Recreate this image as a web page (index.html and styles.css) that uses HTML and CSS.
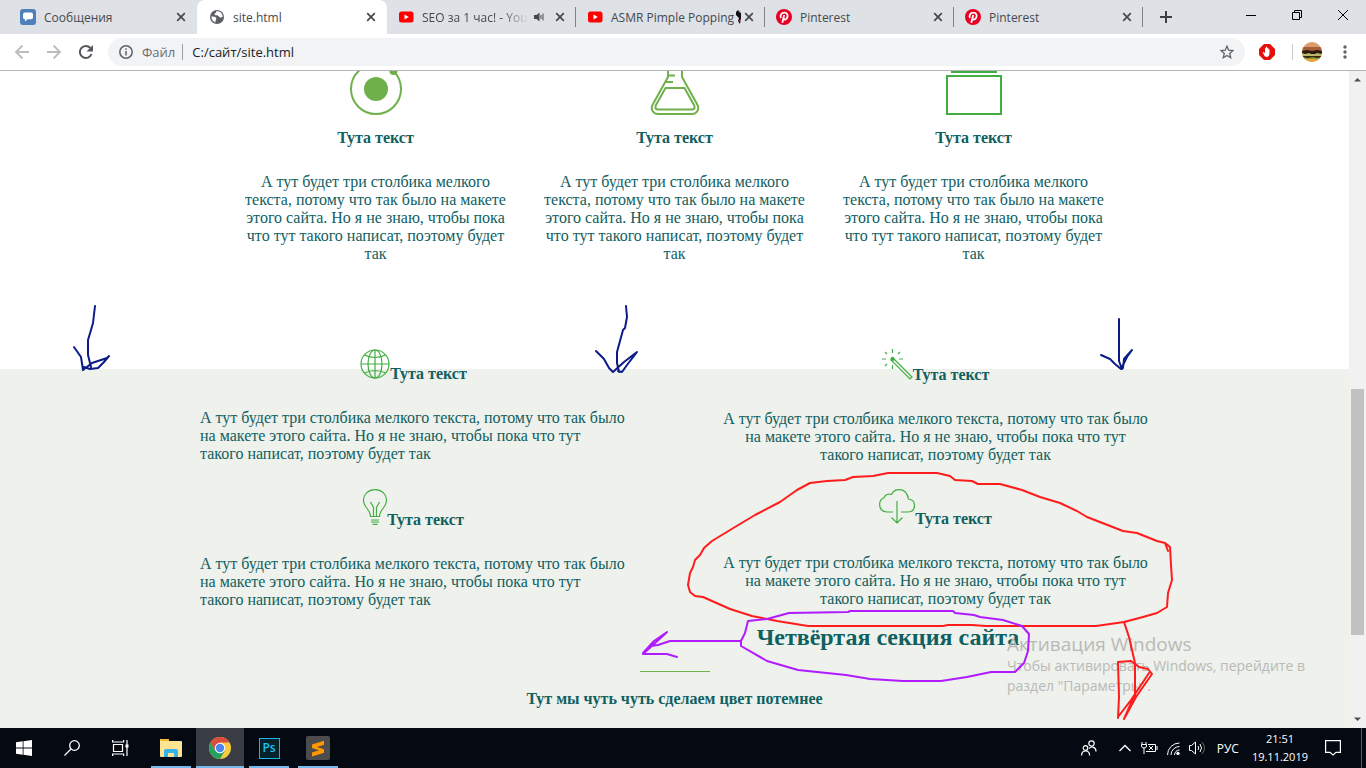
FILE: index.html
```html
<!DOCTYPE html>
<html lang="ru">
<head>
<meta charset="utf-8">
<title>site.html</title>
<link rel="stylesheet" href="styles.css">
</head>
<body>
<svg class="defs" width="0" height="0" aria-hidden="true">
  <symbol id="x" viewBox="0 0 10 10"><path d="M1.2 1.2 8.8 8.8M8.8 1.2 1.2 8.8" stroke="#45494d" stroke-width="1.7"/></symbol>
  <symbol id="yt" viewBox="0 0 16 16"><rect x="1" y="2.500" width="14.500" height="11" rx="2.500" fill="#f00"/><path d="M6.500 5.500v5L10.800 8z" fill="#fff"/></symbol>
  <symbol id="pin" viewBox="0 0 16 16"><circle cx="8" cy="8" r="8" fill="#e60023"/><path d="M6.300 13.800 8.200 6M5 9C3.500 6.500 5.500 3.700 8.300 3.700c2.600 0 3.800 1.900 3.200 4.100-.6 2.600-3.200 3.500-4.200 1.800" fill="none" stroke="#fff" stroke-width="1.800"/></symbol>
</svg>

<header class="browser">
  <nav class="tabs" aria-label="Вкладки">
    <div class="tab">
      <svg class="fav" viewBox="0 0 16 16"><rect width="16" height="16" rx="3" fill="#4f80b9"/><path d="M5 3.500h6q2 0 2 2v2.800q0 2-2 2H7.500L5 12.500v-2.200q-2 0-2-2V5.500q0-2 2-2z" fill="#fff"/></svg>
      <span class="tab-title">Сообщения</span>
      <button class="close" aria-label="Закрыть"><svg><use href="#x"/></svg></button>
    </div>
    <div class="tab active">
      <svg class="fav" viewBox="0 0 16 16"><circle cx="8" cy="8" r="7" fill="#5a5e63"/><path d="M2.300 7.500c2 0 5 .2 5 2.200 0 1.500-1 1.500-1 3.800C4 12.600 2.300 10.500 2.300 7.500zM7 2.300c0 1.700 0 2-1.500 2.200 0 1.500.5 1.700 2.500 1.700 2 .3 2 2.300 3.500 2.300 1 0 1.300-.6 2.200-.6 0-2.900-1.700-5-4.200-5.700z" fill="#fff"/></svg>
      <span class="tab-title">site.html</span>
      <button class="close" aria-label="Закрыть"><svg><use href="#x"/></svg></button>
    </div>
    <div class="tab divided">
      <svg class="fav"><use href="#yt"/></svg>
      <span class="tab-title fade">SEO за 1 час! - You</span>
      <svg class="sound" viewBox="0 0 12 12"><path d="M1 4h2.500L6.500 1.500v9L3.500 8H1z" fill="#45494d"/><path d="M8 4v4M10 2.500v7" stroke="#45494d"/></svg>
      <button class="close" aria-label="Закрыть"><svg><use href="#x"/></svg></button>
    </div>
    <div class="tab divided">
      <svg class="fav"><use href="#yt"/></svg>
      <span class="tab-title">ASMR Pimple Popping</span>
      <svg class="parrot" viewBox="0 0 7 14"><path d="M1 2 3 0l3 3v5l-1 6-2-3 1-3-3-3z" fill="#111"/><path d="M3 1h2v2z" fill="#2bb"/><path d="M4 10h2v2z" fill="#e5a"/></svg>
      <button class="close" aria-label="Закрыть"><svg><use href="#x"/></svg></button>
    </div>
    <div class="tab divided">
      <svg class="fav"><use href="#pin"/></svg>
      <span class="tab-title">Pinterest</span>
      <button class="close" aria-label="Закрыть"><svg><use href="#x"/></svg></button>
    </div>
    <div class="tab divided">
      <svg class="fav"><use href="#pin"/></svg>
      <span class="tab-title">Pinterest</span>
      <button class="close" aria-label="Закрыть"><svg><use href="#x"/></svg></button>
    </div>
    <button class="new-tab" aria-label="Новая вкладка"><svg width="12" height="12" viewBox="0 0 12 12"><path d="M6 0v12M0 6h12" stroke="#3c4043" stroke-width="2"/></svg></button>
    <div class="window-buttons">
      <button aria-label="Свернуть"><svg width="10" height="10"><path d="M0 5.500h10" stroke="#000"/></svg></button>
      <button aria-label="Развернуть"><svg width="10" height="10" fill="none" stroke="#000"><path d="M.5 2.500h7v7h-7zM2.500 2.500v-2h7v7h-2"/></svg></button>
      <button aria-label="Закрыть окно"><svg width="10" height="10"><path d="m0 0 10 10M10 0 0 10" stroke="#000"/></svg></button>
    </div>
  </nav>

  <div class="toolbar">
    <button class="tool" aria-label="Назад"><svg width="16" height="16" viewBox="0 0 16 16" fill="none" stroke="#babcbe" stroke-width="1.800"><path d="M15 8H2M8.500 1.500 2 8l6.500 6.500"/></svg></button>
    <button class="tool" aria-label="Вперёд"><svg width="16" height="16" viewBox="0 0 16 16" fill="none" stroke="#babcbe" stroke-width="1.800"><path d="M1 8h13M7.500 1.500 14 8l-6.500 6.500"/></svg></button>
    <button class="tool" aria-label="Обновить"><svg width="16" height="16" viewBox="0 0 16 16"><path d="M13.500 10A6 6 0 1 1 12.400 4" fill="none" stroke="#55595e" stroke-width="2"/><path d="M15 1v6.500H8.500z" fill="#55595e"/></svg></button>
    <div class="omnibox">
      <svg width="14" height="14" viewBox="0 0 14 14" fill="none" stroke="#5f6368" stroke-width="1.500"><circle cx="7" cy="7" r="6.200"/><path d="M7 6v4.500M7 3.300v1.500"/></svg>
      <label for="url">Файл</label>
      <input id="url" type="text" value="C:/сайт/site.html">
      <button class="star" aria-label="В закладки"><svg width="14" height="14" viewBox="0 0 14 14"><path d="m7 1.200 1.700 4 4.300.4-3.300 2.800 1 4.300L7 10.400l-3.700 2.300 1-4.300L1 5.600l4.300-.4z" fill="none" stroke="#5f6368" stroke-width="1.300"/></svg></button>
    </div>
    <div class="extras">
      <button aria-label="AdBlock"><svg width="16" height="16" viewBox="0 0 16 16"><path d="M5 0h6l5 5v6l-5 5H5l-5-5V5z" fill="#e60f0f"/><path d="M4.500 8 6 9V4.200q.6-.8 1 0V3.200q.7-.8 1.200 0v1q.6-.8 1.100 0v1.200q.8-.6 1.200 0V9q0 4-3.200 4C5.500 13 5 11 3.800 8.600z" fill="#fff"/></svg></button>
      <span class="rule"></span>
      <button aria-label="Профиль"><svg width="20" height="20" viewBox="0 0 20 20"><clipPath id="round"><circle cx="10" cy="10" r="10"/></clipPath><g clip-path="url(#round)"><path fill="#d99b6c" d="M0 0h20v20H0z"/><path fill="#a65f38" d="M0 5h20v4H0z"/><path d="m0 9 5-1 5 1 5-1 5 1v3H0z" fill="#2c1a0e"/><path d="m0 11 3 1 4-1 4 2 4-2 5 1v2H0z" fill="#b9b96a"/><path fill="#3b2612" d="M0 14h20v2H0z"/><path fill="#7e9a32" d="m0 15 6 1 5-1 4 1 5-1v2H0z"/><path fill="#e9a53b" d="M0 17h20v3H0z"/></g></svg></button>
      <button aria-label="Меню"><svg width="4" height="14" fill="#5f6368"><circle cx="2" cy="2" r="1.700"/><circle cx="2" cy="7" r="1.700"/><circle cx="2" cy="12" r="1.700"/></svg></button>
    </div>
  </div>
</header>

<div class="viewport">
  <main class="site">
    <section class="columns">
      <article>
        <svg width="52" height="44" viewBox="1 0 52 44"><circle cx="27" cy="18" r="25" fill="none" stroke="#6fb04a" stroke-width="2"/><circle cx="27" cy="18" r="12" fill="#6fb04a"/><circle cx="44.500" cy="0" r="4" fill="#6fb04a"/></svg>
        <h3>Тута текст</h3>
        <p>А тут будет три столбика мелкого текста, потому что так было на макете этого сайта. Но я не знаю, чтобы пока что тут такого написат, поэтому будет так</p>
      </article>
      <article>
        <svg width="50" height="44" viewBox="0 0 50 44" fill="none" stroke="#6fb04a" stroke-width="2"><path d="M18 0v6L3 33c-3 5 0 10 5 10h34c5 0 8-5 5-10L32 6V0M18 4.500h7M16 11h7M15.500 17h19L44 34c1.500 3 0 4.500-2 4.500H8c-2 0-3.500-1.500-2-4.500z"/></svg>
        <h3>Тута текст</h3>
        <p>А тут будет три столбика мелкого текста, потому что так было на макете этого сайта. Но я не знаю, чтобы пока что тут такого написат, поэтому будет так</p>
      </article>
      <article>
        <svg width="56" height="44" viewBox="0 0 56 44" fill="none" stroke="#42ae42" stroke-width="2"><path d="M1 5h54v38H1zM5 1h46"/></svg>
        <h3>Тута текст</h3>
        <p>А тут будет три столбика мелкого текста, потому что так было на макете этого сайта. Но я не знаю, чтобы пока что тут такого написат, поэтому будет так</p>
      </article>
    </section>

    <section class="tinted">
      <div class="features">
        <article>
          <h3><svg width="30" height="30" viewBox="0 0 30 30" fill="none" stroke="#42ae42" stroke-width="1.200"><circle cx="15" cy="15" r="14"/><ellipse cx="15" cy="15" rx="7" ry="14"/><path d="M15 1v28M1 15h28M4.500 6q10.500 5 21 0M4.500 24q10.500-5 21 0"/></svg>Тута текст</h3>
          <p>А тут будет три столбика мелкого текста, потому что так было на макете этого сайта. Но я не знаю, чтобы пока что тут такого написат, поэтому будет так</p>
        </article>
        <article class="centered">
          <h3><svg width="31" height="31" viewBox="0 0 31 31" fill="none" stroke="#42ae42" stroke-width="1.200"><path d="M10.500 8.500 30 28l-2 2L9 11z"/><circle cx="10.500" cy="10" r="1.500" fill="#42ae42"/><path d="M10.500 0v4M10.500 16v4M0 10h4M17 10h4M3 3l2 2M18 3l-2 2M3 17l2-2"/></svg>Тута текст</h3>
          <p>А тут будет три столбика мелкого текста, потому что так было на макете этого сайта. Но я не знаю, чтобы пока что тут такого написат, поэтому будет так</p>
        </article>
        <article>
          <h3><svg width="24" height="36" viewBox="0 0 24 36" fill="none" stroke="#42ae42" stroke-width="1.200"><path d="M7.500 27.500c0-7-7-9-7-16C.5 5 5.500.6 12 .6S23.500 5 23.500 11.500c0 7-7 9-7 16zM8 31h8M8 33h8M9.500 35.300h5M10.500 27v-8.500L7.500 13M13.500 27v-8.500l3-5.500"/></svg>Тута текст</h3>
          <p>А тут будет три столбика мелкого текста, потому что так было на макете этого сайта. Но я не знаю, чтобы пока что тут такого написат, поэтому будет так</p>
        </article>
        <article class="centered">
          <h3><svg width="36" height="35" viewBox="0 0 36 35" fill="none" stroke="#42ae42" stroke-width="1.200"><path d="M14 23H8C3 23 .6 19.500.6 15.500c0-3.500 2-6 4.700-7C6 5.500 9 4.500 12.500 5.500 14 2 17 .6 20 .6c5 0 8.500 3.400 9.500 9.400 3.500.5 6 3 6 6.500 0 4-2.500 6.500-7 6.500H22M18 12v21M12.500 28.500 18 34l5.500-5.500"/></svg>Тута текст</h3>
          <p>А тут будет три столбика мелкого текста, потому что так было на макете этого сайта. Но я не знаю, чтобы пока что тут такого написат, поэтому будет так</p>
        </article>
        <h2>Четвёртая секция сайта</h2>
      </div>
      <hr>
      <h3 class="subtitle">Тут мы чуть чуть сделаем цвет потемнее</h3>
    </section>
  </main>
  <div class="scrollbar" aria-hidden="true">
    <svg width="17" height="17"><path d="M5 10.500 8.500 7l3.500 3.500z" fill="#505050"/></svg>
    <div class="track"><div class="thumb"></div></div>
    <svg width="17" height="17"><path d="M5 6.500 8.500 10 12 6.500z" fill="#505050"/></svg>
  </div>
</div>

<footer class="taskbar">
  <div class="system">
    <button aria-label="Пуск"><svg width="16" height="16" fill="#fff"><path d="m0 2.300 6.700-1v6.200H0zM7.500 1.200 16 0v7.500H7.500zM0 8.400h6.700v6.300l-6.700-1zM7.500 8.400H16V16l-8.500-1.200z"/></svg></button>
    <button aria-label="Поиск"><svg width="16" height="16" fill="none" stroke="#fff" stroke-width="1.300"><circle cx="10.500" cy="5.500" r="4.800"/><path d="M7 9 .5 15.500"/></svg></button>
    <button aria-label="Просмотр задач"><svg width="17" height="16" fill="none" stroke="#fff" stroke-width="1.200"><path d="M1.500 4.500h9v7h-9zM.6 0v2h11V0M.6 16v-2h11v2M15 0v16"/><path d="M13.500 4.500h3v3h-3z" fill="#fff" stroke="none"/></svg></button>
  </div>
  <div class="apps">
    <button aria-label="Проводник"><svg width="22" height="18"><path d="M0 0h8l1 2h12q1 0 1 1v14q0 1-1 1H1q-1 0-1-1z" fill="#ffe593"/><path d="M1 0h8v2H0z" fill="#f5b82e"/><path d="M4 18v-6q0-2 2-2h10q2 0 2 2v6h-4v-4H8v4z" fill="#36b4e8"/></svg></button>
    <button class="current" aria-label="Chrome"><svg width="22" height="22" viewBox="0 0 22 22"><circle cx="11" cy="11" r="11" fill="#f8ca3e"/><path d="M1.500 5.500A11 11 0 0 1 20.500 5.500H11L6.200 13.700z" fill="#dd4b3e"/><path d="M1.500 5.500A11 11 0 0 0 11 22l4.800-8.200H6.200z" fill="#23a163"/><circle cx="11" cy="11" r="5.200" fill="#fff"/><circle cx="11" cy="11" r="4.200" fill="#4a86ee"/></svg></button>
    <button class="ps" aria-label="Photoshop"><span>Ps</span></button>
    <button aria-label="Sublime Text"><svg width="24" height="24"><rect width="24" height="24" rx="2" fill="#4c4c4c"/><path d="M6 8.500 18 4.700v4L11 11l7 2.300v3.400L6 20.500v-4l7-2.200-7-2.300z" fill="#ff9800"/></svg></button>
  </div>
  <div class="tray">
    <svg width="16" height="16" fill="none" stroke="#fff" stroke-width="1.200"><circle cx="10.500" cy="3.500" r="2.700"/><circle cx="4.500" cy="8" r="2.300"/><path d="M.6 15.500c0-6 8-6 8 0M8 8.500c3-3 7-1 7 3"/></svg>
    <svg class="chevron" width="12" height="8" fill="none" stroke="#fff" stroke-width="1.300"><path d="M.5 7 6 1.500 11.500 7"/></svg>
    <svg width="17" height="12" fill="none" stroke="#fff"><path d="M7 2.500h7.500v7H5M16 4v4M3 6v6M1 0v2.500M5 0v2.500M.5 2.500h5V4q0 2-2.500 2T.5 4zM8 4l4 4M12 4 8 8"/></svg>
    <svg width="13" height="13" fill="none" stroke="#fff"><path d="M.5 13A12 12 0 0 1 12.500 1M4 13A8.500 8.500 0 0 1 12.500 4.500M7.500 13A5 5 0 0 1 12.500 8"/><circle cx="11" cy="11.500" r="1.300" fill="#fff"/></svg>
    <svg width="17" height="14" fill="none" stroke="#fff"><path d="M.5 4.500h2L6.500 1v12l-4-3.500h-2zM9 5q1.500 2 0 4M11 3q3 4 0 8"/><path d="M13 1q5 6 0 12" stroke="#666"/></svg>
    <span class="lang">РУС</span>
    <time datetime="2019-11-19T21:51">21:51<br>19.11.2019</time>
    <svg width="16" height="16" fill="none" stroke="#fff" stroke-width="1.200"><path d="M.6.6h14.800v11.800H11L8 15l-3-2.600H.6z"/></svg>
  </div>
  <span class="show-desktop"></span>
</footer>

<aside class="watermark"><strong>Активация Windows</strong><span>Чтобы активировать Windows, перейдите в<br>раздел "Параметры".</span></aside>

<svg class="ink" width="1366" height="768" viewBox="0 0 1366 768" aria-hidden="true">
  <g stroke="#0b1c86">
    <path d="M95 306 93 323l-2 7-3 10v15l3 12M74 347l7 10 2 13 9-7 15-5 2-2-5 6-6 6-8 1-6-2"/>
    <path d="m626 306 1 11-2 11-2 2-6 22v11l2 9M596 351l8 8 5 9 4 4 11-10 13-10-10 13-5 7-4-1"/>
    <path d="M1119 319v42l3 8M1101 355l9 4 5 5 6 5 6-12 5-7-8 9-1 9"/>
  </g>
  <g stroke="#ff1c1c">
    <path d="m688 585 2-12 3-6 2-7 5-5 4-7 8-7 23-14 20-12 25-13 17-12 13-7 17-2 18-1 8-3 20-1 15-3h49l13 3 5 4 17 1 6 3h22l22 6 18 7 20 6 17 8 10 6 36 14 14 2 20 8 8 2 5 4 1 18 1 15-4 13-1 14-10 6-14 4-19 5-28 4H986l-14-1h-24l-5 1H808l-31-5-15-3-10-2-22-7-27-12-8-1-5-4zM1165 543l3 8"/>
    <path d="m1124 622 5 15 6 26v34M1118 718l1-21-1-35 13-1 8 6 9 2 4 5-16 23-12 22 11-25 14-21-18 27-13 17"/>
  </g>
  <g stroke="#b01cff">
    <path d="m741 641 4-8 3-12 19-2 22-6 59-1 2-1h103l2 2 19 2 6 2 23 3 19 6 7 8-1 17-4 12-9 9h-24l-24 5-26 4h-38l-33-2-24-4-48-5-31-9-26-15z"/>
    <path d="M741 641h-71l-12 4-7 1-8 7 11-12 13-9-14 13-10 9h24l10 3"/>
  </g>
</svg>
</body>
</html>
```
FILE: styles.css
```css
* { box-sizing: border-box; }

body {
  margin: 0;
  height: 100vh;
  display: flex;
  flex-direction: column;
  overflow: hidden;
  position: relative;
  background: #fff;
  font-family: "Open Sans", "Noto Sans", sans-serif;
}

button {
  border: 0;
  padding: 0;
  margin: 0;
  background: none;
  display: flex;
  align-items: center;
  justify-content: center;
  font-family: inherit;
}

svg { flex: none; }
.defs { position: absolute; }

/* Browser frame */
.browser { border-bottom: 1px solid #b4b6b8; }

.tabs {
  display: flex;
  height: 34px;
  padding-left: 8px;
  background: #dee1e6;
}

.tab {
  flex: 0 1 189px;
  min-width: 0;
  display: flex;
  align-items: center;
  padding: 0 11px 0 12px;
  position: relative;
  font-size: 12px;
  color: #45494d;
}

.tab.active { flex-basis: 190px; background: #fff; border-radius: 8px 8px 0 0; }

.tab.divided { padding-left: 11px; }
.tab.divided::after {
  content: "";
  position: absolute;
  right: 0;
  top: 7px;
  bottom: 7px;
  width: 1px;
  background: #808488;
}

.fav { width: 16px; height: 16px; margin-right: 8px; }
.tab-title { flex: 1; min-width: 0; white-space: nowrap; }
.fade { mask-image: linear-gradient(90deg, #000 75%, transparent); }
.close, .close svg { width: 10px; height: 10px; }
.sound { width: 12px; height: 12px; margin: 0 10px 0 4px; }
.parrot { width: 7px; height: 14px; margin-right: 2px; }
.new-tab { width: 46px; }

.window-buttons { display: flex; margin-left: auto; padding-bottom: 5px; }
.window-buttons button { width: 46px; }

.toolbar {
  display: flex;
  align-items: center;
  height: 36px;
  padding-left: 6px;
}

.tool { width: 32px; height: 32px; }

.omnibox {
  flex: 1;
  min-width: 0;
  height: 28px;
  margin-left: 6px;
  padding: 0 11px;
  display: flex;
  align-items: center;
  border-radius: 14px;
  background: #f1f3f4;
  font-size: 13px;
}

.omnibox label {
  margin-left: 9px;
  padding-right: 7px;
  border-right: 1px solid #9a9da1;
  line-height: 16px;
  color: #6a6e73;
}

.omnibox input {
  flex: 1;
  min-width: 0;
  padding: 0 0 0 9px;
  border: 0;
  outline: 0;
  background: none;
  font: inherit;
  color: #202124;
}

.extras { display: flex; align-items: center; gap: 9px; padding: 0 19px 0 14px; }
.extras .rule { width: 1px; height: 16px; margin-left: 8px; background: #c8cacd; }
.extras button:last-child { margin-left: 12px; }

/* Page */
.viewport { flex: 1; min-height: 0; display: flex; }

.site {
  flex: 1;
  min-width: 0;
  display: flex;
  flex-direction: column;
  overflow: hidden;
  font: 16px/18px "Liberation Serif", "Times New Roman", serif;
  color: #10605f;
}

.site h2, .site h3, .site p { margin: 0; }
.site h3 { font-size: 16px; }

.columns {
  display: grid;
  grid-template-columns: repeat(3, 266px);
  justify-content: center;
  gap: 33px;
  padding-bottom: 106px;
  text-align: center;
}

.columns svg { display: block; margin: 0 auto 14px; }
.columns h3 { margin-bottom: 26px; }

.tinted { flex: 1; background: #eef1ec; }

.features {
  display: grid;
  grid-template-columns: 427px 427px;
  justify-content: center;
  gap: 25px 95px;
  width: 949px;
  max-width: 100%;
  margin: -20px auto 0;
}

.features h3 { margin-bottom: 26px; text-align: center; }
.features svg { vertical-align: baseline; }
.centered { text-align: center; }

.features h2 {
  grid-column: 1 / -1;
  margin: -11px 0 0 427px;
  font-size: 24px;
  line-height: 28px;
  text-align: center;
}

.tinted hr {
  width: 70px;
  height: 1px;
  margin: 20px auto 18px;
  border: 0;
  background: #6fb04a;
}

.subtitle { text-align: center; }

.scrollbar { width: 17px; display: flex; flex-direction: column; background: #f1f1f1; }
.track { flex: 1; display: flex; flex-direction: column; padding: 301px 2px 76px; }
.thumb { flex: 1; background: #c1c1c1; }

/* Taskbar */
.taskbar { height: 40px; display: flex; background: #050a12; color: #fff; }
.system, .apps { display: flex; }
.system button { width: 48px; }
.apps { gap: 1px; margin-left: 3px; }

.apps button { width: 48px; position: relative; }
.apps button::after {
  content: "";
  position: absolute;
  left: 4px;
  right: 4px;
  bottom: 0;
  height: 2px;
  background: #76b9ed;
}
.apps .current { background: #3a3e44; }
.apps .current::after { left: 0; right: 0; }

.ps span {
  width: 21px;
  height: 21px;
  border: 1px solid #18b5e8;
  background: #04222c;
  color: #20c0f0;
  font-size: 12px;
  font-weight: 600;
  line-height: 18px;
}

.tray {
  display: flex;
  align-items: center;
  gap: 9px;
  margin-left: auto;
  padding-right: 20px;
  font-size: 12px;
}

.chevron { margin: 0 1px 0 13px; }
.lang { margin-left: 2px; }
.tray time { margin: 0 8px 0 4px; font-size: 11px; line-height: 18px; text-align: center; }
.show-desktop { width: 5px; border-left: 1px solid #5b5f65; }

/* Layers over the desktop */
.watermark {
  position: absolute;
  right: 32px;
  bottom: 72px;
  width: 327px;
  display: flex;
  flex-direction: column;
  color: #b8bab7;
  pointer-events: none;
}

.watermark strong { font-size: 19px; font-weight: 400; line-height: 24px; }
.watermark span { font-size: 14px; line-height: 20px; white-space: nowrap; }

.ink {
  position: absolute;
  left: 0;
  top: 0;
  fill: none;
  stroke-width: 2;
  stroke-linejoin: round;
  stroke-linecap: round;
  pointer-events: none;
}
```
